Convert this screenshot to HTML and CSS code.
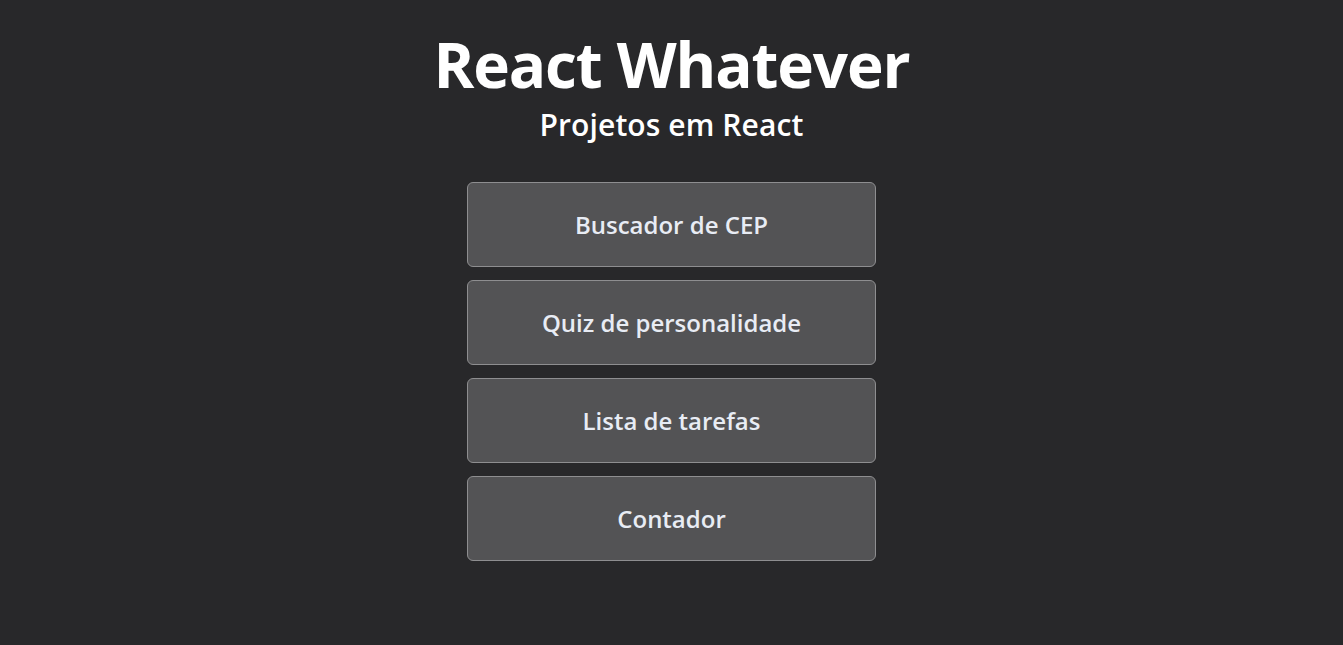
FILE: index.html
```html
<!DOCTYPE html>
<html lang="pt-BR">
<head>
<meta charset="utf-8">
<title>React Whatever</title>
<link rel="stylesheet" href="styles.css">
</head>
<body>
<main class="home">
  <h1 class="title">React Whatever</h1>
  <h2 class="subtitle">Projetos em React</h2>
  <nav class="menu">
    <button class="menu-btn">Buscador de CEP</button>
    <button class="menu-btn">Quiz de personalidade</button>
    <button class="menu-btn">Lista de tarefas</button>
    <button class="menu-btn">Contador</button>
  </nav>
</main>
</body>
</html>
```
FILE: styles.css
```css
html, body {
  margin: 0;
  padding: 0;
  background: #28282a;
  height: 100%;
}
body {
  font-family: "Open Sans", "Noto Sans", sans-serif;
  color: #ffffff;
}
.home {
  display: flex;
  flex-direction: column;
  align-items: center;
  padding-top: 24px;
}
.title {
  margin: 0;
  font-size: 62px;
  font-weight: 700;
  line-height: 80px;
  letter-spacing: -1.1px;
}
.subtitle {
  margin: 0;
  font-size: 30px;
  font-weight: 600;
  line-height: 42px;
  letter-spacing: 0.1px;
}
.menu {
  display: flex;
  flex-direction: column;
  gap: 13px;
  margin-top: 36px;
}
.menu-btn {
  width: 409px;
  height: 85px;
  background: #535355;
  border: 1px solid #8e8e90;
  border-radius: 6px;
  color: #e8ecf4;
  font-family: "Open Sans", "Noto Sans", sans-serif;
  font-size: 24px;
  font-weight: 600;
  cursor: pointer;
}
```
